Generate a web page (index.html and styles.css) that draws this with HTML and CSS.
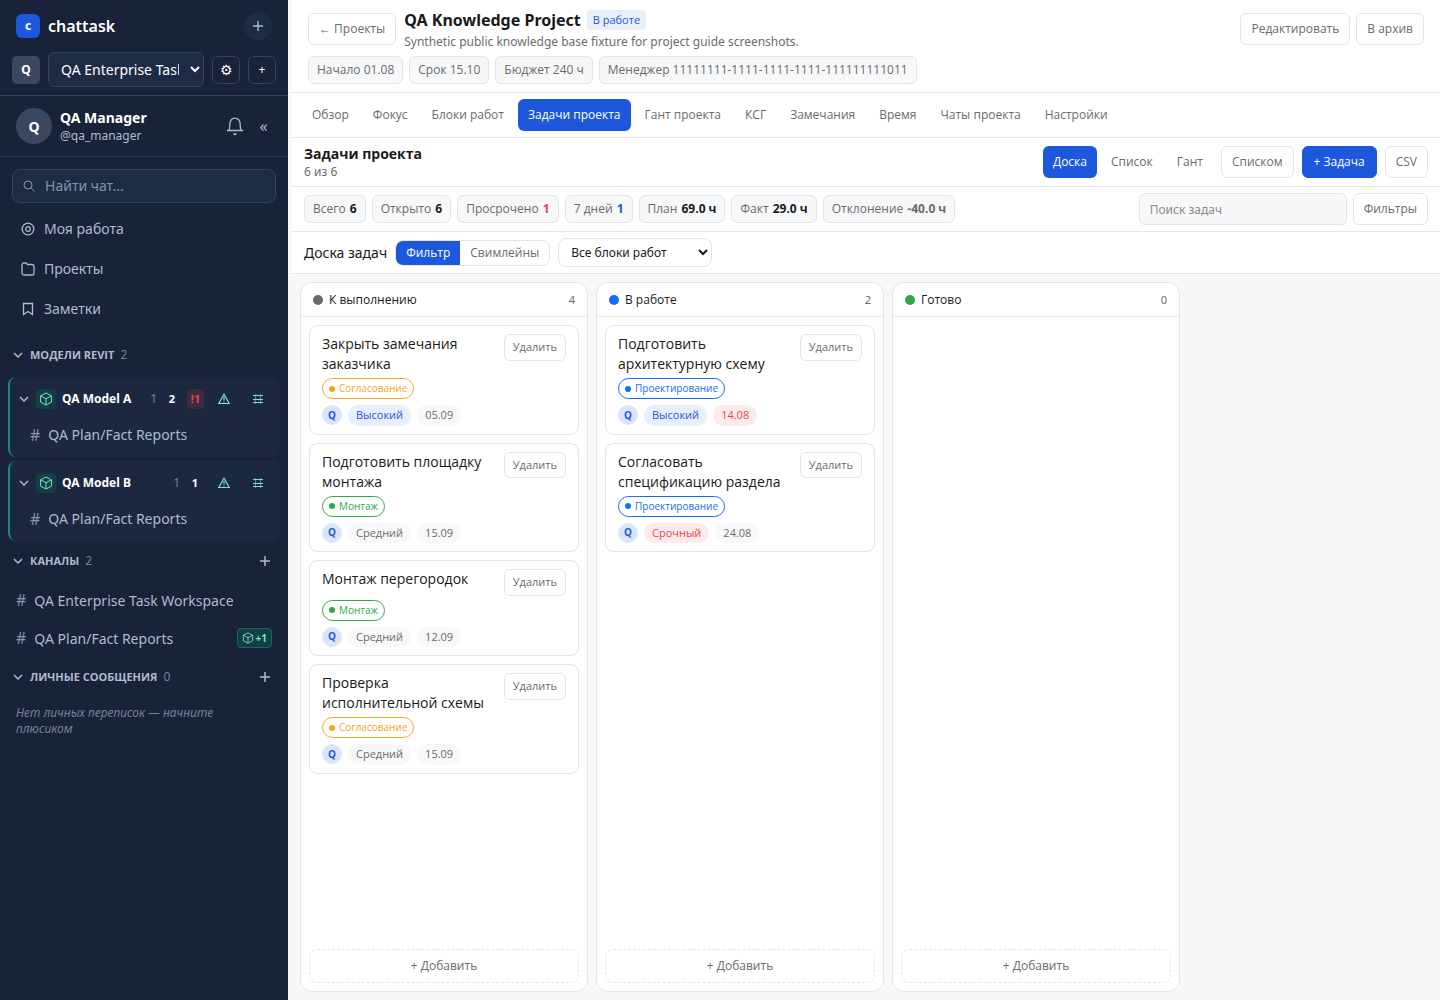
FILE: index.html
```html
<!DOCTYPE html>
<html lang="ru">
<head>
<meta charset="utf-8">
<meta name="viewport" content="width=device-width, initial-scale=1">
<title>QA Knowledge Project — chattask</title>
<link rel="stylesheet" href="styles.css">
</head>
<body>
<svg class="sprite" aria-hidden="true">
  <symbol id="i-chevron" viewBox="0 0 12 12"><path d="M2 4l4 4 4-4"/></symbol>
  <symbol id="i-plus" viewBox="0 0 12 12"><path d="M6 1v10M1 6h10"/></symbol>
  <symbol id="i-cube" viewBox="0 0 14 14"><path d="M7 1l5.4 2.8v6.4L7 13l-5.4-2.8V3.8zM1.6 3.8L7 6.7l5.4-2.9M7 6.7V13"/></symbol>
  <symbol id="i-warn" viewBox="0 0 14 14"><path d="M7 2.2L1.8 11.5h10.4zM7 5v3.6M7 9.500v1"/></symbol>
  <symbol id="i-grid" viewBox="0 0 14 14"><path d="M2 3.500h10M2 7.500h10M2 10.500h10"/><path d="M4.500 2v10M9.500 2v10" opacity=".5"/></symbol>
</svg>
<div class="app">
  <aside class="sidebar">
    <div class="brand">
      <span class="brand-logo">c</span>
      <span class="brand-name">chattask</span>
      <button class="round-btn" type="button" aria-label="Создать"><svg class="icon-12"><use href="#i-plus"/></svg></button>
    </div>
    <div class="workspace">
      <span class="ws-avatar">Q</span>
      <select class="ws-select" aria-label="Рабочее пространство"><option>QA Enterprise Task Workspace</option></select>
      <button class="ws-btn gear" type="button" aria-label="Настройки пространства">⚙</button>
      <button class="ws-btn" type="button" aria-label="Новое пространство">+</button>
    </div>
    <div class="user">
      <span class="user-avatar">Q</span>
      <div class="user-info">
        <div class="user-name">QA Manager</div>
        <div class="user-handle">@qa_manager</div>
      </div>
      <button class="bare-btn" type="button" aria-label="Уведомления"><svg class="icon-20" viewBox="0 0 20 20"><path d="M3.800 14.500c.9-1.700 1.100-3.400 1.100-7a5.100 5.300 0 0 1 10.200 0c0 3.600.2 5.300 1.100 7M1.900 14.500h16.200M8.400 17.400l1.600 1.200 1.600-1.200"/></svg></button>
      <button class="bare-btn collapse" type="button" aria-label="Свернуть">«</button>
    </div>
    <div class="side-search">
      <svg class="icon-12" viewBox="0 0 12 12"><circle cx="5" cy="5" r="4"/><path d="M8 8l3.600 3.600"/></svg>
      <input type="search" placeholder="Найти чат..." aria-label="Найти чат">
    </div>
    <nav class="side-nav">
      <a href="#work"><svg class="icon-16" viewBox="0 0 16 16"><circle cx="8" cy="8" r="5.800"/><circle cx="8" cy="8" r="2.300"/></svg>Моя работа</a>
      <a href="#projects"><svg class="icon-16" viewBox="0 0 16 16"><path d="M2 12V4a2 2 0 0 1 2-2h2l1.500 1.500H12a2 2 0 0 1 2 2V12a2 2 0 0 1-2 2H4a2 2 0 0 1-2-2z"/></svg>Проекты</a>
      <a href="#notes"><svg class="icon-16" viewBox="0 0 16 16"><path d="M3.500 2.500h9v11L8 10.500l-4.500 3z"/></svg>Заметки</a>
    </nav>
    <div class="side-head"><svg class="icon-12"><use href="#i-chevron"/></svg><h2>МОДЕЛИ REVIT</h2><span class="muted">2</span></div>
    <div class="models">
      <section class="model">
        <div class="model-row">
          <svg class="icon-12 chev"><use href="#i-chevron"/></svg>
          <span class="cube"><svg class="icon-14"><use href="#i-cube"/></svg></span>
          <span class="model-name">QA Model A</span>
          <span class="count-dim">1</span><span class="count">2</span><span class="count alert">!1</span>
          <button class="model-btn" type="button" aria-label="Предупреждения"><svg class="icon-14"><use href="#i-warn"/></svg></button>
          <button class="model-btn" type="button" aria-label="Оси"><svg class="icon-14"><use href="#i-grid"/></svg></button>
        </div>
        <a class="channel nested" href="#a"><span class="hash">#</span>QA Plan/Fact Reports</a>
      </section>
      <section class="model">
        <div class="model-row">
          <svg class="icon-12 chev"><use href="#i-chevron"/></svg>
          <span class="cube"><svg class="icon-14"><use href="#i-cube"/></svg></span>
          <span class="model-name">QA Model B</span>
          <span class="count-dim">1</span><span class="count">1</span>
          <button class="model-btn" type="button" aria-label="Предупреждения"><svg class="icon-14"><use href="#i-warn"/></svg></button>
          <button class="model-btn" type="button" aria-label="Оси"><svg class="icon-14"><use href="#i-grid"/></svg></button>
        </div>
        <a class="channel nested" href="#b"><span class="hash">#</span>QA Plan/Fact Reports</a>
      </section>
    </div>
    <div class="side-head"><svg class="icon-12"><use href="#i-chevron"/></svg><h2>КАНАЛЫ</h2><span class="muted">2</span><button class="add-btn" type="button" aria-label="Добавить канал"><svg class="icon-12"><use href="#i-plus"/></svg></button></div>
    <a class="channel" href="#workspace"><span class="hash">#</span>QA Enterprise Task Workspace</a>
    <a class="channel" href="#reports"><span class="hash">#</span>QA Plan/Fact Reports<span class="model-tag"><svg class="icon-12"><use href="#i-cube"/></svg>+1</span></a>
    <div class="side-head"><svg class="icon-12"><use href="#i-chevron"/></svg><h2>ЛИЧНЫЕ СООБЩЕНИЯ</h2><span class="muted">0</span><button class="add-btn" type="button" aria-label="Новое сообщение"><svg class="icon-12"><use href="#i-plus"/></svg></button></div>
    <p class="side-empty">Нет личных переписок — начните плюсиком</p>
  </aside>

  <main class="main">
    <header class="project">
      <div class="project-top">
        <button class="btn" type="button">← Проекты</button>
        <div class="project-info">
          <div class="project-title"><h1>QA Knowledge Project</h1><span class="status">В работе</span></div>
          <p>Synthetic public knowledge base fixture for project guide screenshots.</p>
        </div>
        <div class="group">
          <button class="btn" type="button">Редактировать</button>
          <button class="btn" type="button">В архив</button>
        </div>
      </div>
      <div class="chips">
        <span class="chip">Начало 01.08</span>
        <span class="chip">Срок 15.10</span>
        <span class="chip">Бюджет 240 ч</span>
        <span class="chip">Менеджер 11111111-1111-1111-1111-111111111011</span>
      </div>
    </header>
    <nav class="tabs">
      <a class="tab" href="#overview">Обзор</a>
      <a class="tab" href="#focus">Фокус</a>
      <a class="tab" href="#blocks">Блоки работ</a>
      <a class="tab active" href="#tasks" aria-current="page">Задачи проекта</a>
      <a class="tab" href="#gantt">Гант проекта</a>
      <a class="tab" href="#ksg">КСГ</a>
      <a class="tab" href="#remarks">Замечания</a>
      <a class="tab" href="#time">Время</a>
      <a class="tab" href="#chats">Чаты проекта</a>
      <a class="tab" href="#settings">Настройки</a>
    </nav>
    <div class="bar">
      <div class="bar-title"><h2>Задачи проекта</h2><p>6 из 6</p></div>
      <div class="actions">
        <div class="views">
          <button class="tab active" type="button">Доска</button>
          <button class="tab" type="button">Список</button>
          <button class="tab" type="button">Гант</button>
        </div>
        <button class="btn" type="button">Списком</button>
        <button class="btn primary" type="button">+ Задача</button>
        <button class="btn" type="button">CSV</button>
      </div>
    </div>
    <div class="bar stats">
      <div class="chips">
        <span class="chip">Всего <b>6</b></span>
        <span class="chip">Открыто <b>6</b></span>
        <span class="chip">Просрочено <b class="red">1</b></span>
        <span class="chip">7 дней <b class="blue">1</b></span>
        <span class="chip">План <b>69.0 ч</b></span>
        <span class="chip">Факт <b>29.0 ч</b></span>
        <span class="chip">Отклонение <b class="gray">-40.0 ч</b></span>
      </div>
      <div class="group">
        <input class="task-search" type="search" placeholder="Поиск задач" aria-label="Поиск задач">
        <button class="btn" type="button">Фильтры</button>
      </div>
    </div>
    <div class="bar board-bar">
      <h3>Доска задач</h3>
      <div class="segmented"><button class="on" type="button">Фильтр</button><button type="button">Свимлейны</button></div>
      <select class="block-select" aria-label="Блок работ"><option>Все блоки работ</option></select>
    </div>
    <div class="board">
      <section class="column">
        <header class="column-head"><span class="dot todo"></span><h4>К выполнению</h4><span class="column-count">4</span></header>
        <div class="cards">
          <article class="card">
            <div class="card-top"><h5>Закрыть замечания заказчика</h5><button class="delete" type="button">Удалить</button></div>
            <span class="block orange">Согласование</span>
            <div class="meta"><span class="who">Q</span><span class="pill info">Высокий</span><span class="pill">05.09</span></div>
          </article>
          <article class="card">
            <div class="card-top"><h5>Подготовить площадку монтажа</h5><button class="delete" type="button">Удалить</button></div>
            <span class="block green">Монтаж</span>
            <div class="meta"><span class="who">Q</span><span class="pill">Средний</span><span class="pill">15.09</span></div>
          </article>
          <article class="card">
            <div class="card-top"><h5>Монтаж перегородок</h5><button class="delete" type="button">Удалить</button></div>
            <span class="block green">Монтаж</span>
            <div class="meta"><span class="who">Q</span><span class="pill">Средний</span><span class="pill">12.09</span></div>
          </article>
          <article class="card">
            <div class="card-top"><h5>Проверка исполнительной схемы</h5><button class="delete" type="button">Удалить</button></div>
            <span class="block orange">Согласование</span>
            <div class="meta"><span class="who">Q</span><span class="pill">Средний</span><span class="pill">15.09</span></div>
          </article>
        </div>
        <button class="add-task" type="button">+ Добавить</button>
      </section>
      <section class="column">
        <header class="column-head"><span class="dot doing"></span><h4>В работе</h4><span class="column-count">2</span></header>
        <div class="cards">
          <article class="card">
            <div class="card-top"><h5>Подготовить архитектурную схему</h5><button class="delete" type="button">Удалить</button></div>
            <span class="block azure">Проектирование</span>
            <div class="meta"><span class="who">Q</span><span class="pill info">Высокий</span><span class="pill danger">14.08</span></div>
          </article>
          <article class="card">
            <div class="card-top"><h5>Согласовать спецификацию раздела</h5><button class="delete" type="button">Удалить</button></div>
            <span class="block azure">Проектирование</span>
            <div class="meta"><span class="who">Q</span><span class="pill danger">Срочный</span><span class="pill">24.08</span></div>
          </article>
        </div>
        <button class="add-task" type="button">+ Добавить</button>
      </section>
      <section class="column">
        <header class="column-head"><span class="dot done"></span><h4>Готово</h4><span class="column-count">0</span></header>
        <div class="cards"></div>
        <button class="add-task" type="button">+ Добавить</button>
      </section>
    </div>
  </main>
</div>
</body>
</html>
```
FILE: styles.css
```css
:root {
  --ink: #1a1a1a;
  --gray: #6b6b6b;
  --line: #e5e5e5;
  --soft: #f7f8fa;
  --blue: #1d57db;
  --blue-soft: #e8eefc;
  --red: #e5484d;
  --side: #182238;
  --side-raised: #1e2b45;
  --side-line: #34425c;
  --side-text: #aebbd0;
  --mint: #7ee0cc;
  --control-font: "Open Sans", "Noto Sans", sans-serif;
}

* { box-sizing: border-box; }
body {
  margin: 0;
  background: var(--soft);
  color: var(--ink);
  font: 14px/1.5 "Noto Sans", "Liberation Sans", sans-serif;
}
h1, h2, h3, h4, h5, p { margin: 0; font: inherit; }
button, input, select { font: inherit; color: inherit; margin: 0; }
button { cursor: pointer; padding: 0; border: 0; background: none; }
a { color: inherit; text-decoration: none; }
svg { fill: none; stroke: currentColor; flex: none; }
.sprite { display: none; }
.icon-12 { width: 12px; height: 12px; }
.icon-14 { width: 14px; height: 14px; }
.icon-16 { width: 16px; height: 16px; stroke-width: 1.3; }
.icon-20 { width: 20px; height: 20px; stroke-width: 1.3; }

.app { display: flex; gap: 4px; height: 100vh; }

/* Sidebar */
.sidebar {
  flex: none;
  width: 288px;
  overflow: auto;
  background: var(--side);
  color: var(--side-text);
}
.brand { display: flex; align-items: center; gap: 8px; padding: 12px 16px; }
.brand-logo {
  display: grid;
  place-items: center;
  width: 24px;
  height: 24px;
  border-radius: 6px;
  background: var(--blue);
  color: #fff;
  font-size: 12px;
  font-weight: 700;
}
.brand-name { flex: 1; color: #fff; font-size: 16px; line-height: 24px; font-weight: 600; }
.round-btn {
  display: grid;
  place-items: center;
  width: 28px;
  height: 28px;
  border-radius: 50%;
  background: var(--side-raised);
}
.round-btn svg { stroke-width: 1.4; }
.workspace {
  display: flex;
  align-items: center;
  gap: 8px;
  padding: 0 12px 8px;
  border-bottom: 1px solid var(--side-line);
}
.ws-avatar {
  display: grid;
  place-items: center;
  flex: none;
  width: 28px;
  height: 28px;
  border-radius: 5px;
  background: #3a4760;
  color: #fff;
  font-size: 12px;
  font-weight: 700;
}
.ws-select {
  flex: 1;
  min-width: 0;
  height: 35px;
  padding: 0 8px;
  border: 1px solid var(--side-line);
  border-radius: 6px;
  background: var(--side-raised);
  color: #fff;
}
.ws-select, .block-select { cursor: pointer; }
.ws-btn {
  flex: none;
  width: 28px;
  height: 28px;
  border: 1px solid var(--side-line);
  border-radius: 6px;
  color: #fff;
  font-size: 12px;
}
.ws-btn.gear { font-size: 14px; }
.user {
  display: flex;
  align-items: center;
  gap: 8px;
  padding: 12px 16px;
  border-bottom: 1px solid #2d3a52;
}
.user-avatar {
  display: grid;
  place-items: center;
  width: 36px;
  height: 36px;
  border-radius: 50%;
  background: #3a4760;
  color: #fff;
  font-weight: 700;
}
.user-info { flex: 1; }
.user-name { color: #fff; line-height: 20px; font-weight: 700; }
.user-handle { font-size: 12px; line-height: 16px; }
.bare-btn { display: grid; place-items: center; width: 24px; height: 28px; }
.bare-btn.collapse { width: 17px; font-size: 16px; }
.side-search {
  display: flex;
  align-items: center;
  gap: 10px;
  height: 34px;
  margin: 12px 12px 6px;
  padding: 0 10px;
  border: 1px solid var(--side-line);
  border-radius: 8px;
  background: var(--side-raised);
  color: #8593aa;
}
.side-search input { flex: 1; min-width: 0; height: 20px; padding: 0; border: 0; outline: 0; background: none; color: #fff; line-height: 20px; }
.side-search input::placeholder { color: #8593aa; }
.side-nav { margin-bottom: 6px; }
.side-nav a { display: flex; align-items: center; gap: 8px; height: 40px; padding: 0 20px; line-height: 22px; }
.side-head { display: flex; align-items: center; gap: 6px; height: 40px; padding: 0 12px; }
.side-head svg { stroke-width: 1.5; }
.side-head h2 { font-family: var(--control-font); font-size: 11px; font-weight: 700; }
.muted { color: #74829a; font-size: 12px; }
.add-btn { display: grid; place-items: center; width: 22px; height: 22px; margin-left: auto; }
.models { display: grid; gap: 4px; margin: 2px 8px 0; }
.model {
  padding: 4px 8px;
  border-left: 2px solid #1b8a7c;
  border-radius: 8px;
  background: #1b2840;
}
.model-row { display: flex; align-items: center; gap: 6px; height: 36px; font-size: 12px; }
.chev { stroke-width: 1.5; }
.cube {
  display: grid;
  place-items: center;
  width: 20px;
  height: 20px;
  border-radius: 4px;
  background: #123f43;
  color: var(--mint);
}
.model-name { flex: 1; color: #fff; font-weight: 700; }
.count-dim { color: #74829a; }
.count {
  display: grid;
  place-items: center;
  min-width: 18px;
  height: 20px;
  border-radius: 4px;
  color: #fff;
  font-size: 11px;
  font-weight: 700;
}
.count.alert { min-width: 17px; background: #3c2b3e; color: var(--red); }
.model-btn { display: grid; place-items: center; width: 28px; height: 28px; color: var(--mint); }
.model-btn svg { stroke-width: 1.2; }
.channel { display: flex; align-items: center; gap: 8px; height: 38px; padding: 0 16px; }
.channel.nested { height: 36px; padding: 0 12px; line-height: 22px; }
.hash { color: #8593aa; font-size: 16px; }
.model-tag {
  display: flex;
  align-items: center;
  gap: 2px;
  height: 20px;
  margin-left: auto;
  padding: 0 4px;
  border: 1px solid #17695f;
  border-radius: 4px;
  background: #123f43;
  color: var(--mint);
  font-size: 10px;
  font-weight: 700;
}
.side-empty { padding: 8px 16px; color: #74829a; font-size: 12px; line-height: 16px; font-style: italic; }

/* Project header */
.main { display: flex; flex: 1; flex-direction: column; min-width: 0; }
.project { padding: 8px 16px; border-bottom: 1px solid var(--line); background: #fff; }
.project-top { display: flex; align-items: center; gap: 8px; margin-bottom: 6px; }
.project-info { flex: 1; min-width: 0; }
.project-title { display: flex; align-items: center; gap: 6px; }
.project-title h1 { font-size: 16px; line-height: 24px; font-weight: 700; }
.project-info p { padding-top: 1px; color: var(--gray); font-size: 12px; line-height: 17px; }
.status {
  padding: 0 6px;
  border-radius: 4px;
  background: var(--blue-soft);
  color: var(--blue);
  font-family: var(--control-font);
  font-size: 11px;
  line-height: 20px;
}
.btn {
  height: 32px;
  padding: 0 10px;
  border: 1px solid var(--line);
  border-radius: 6px;
  background: #fff;
  color: var(--gray);
  font-family: var(--control-font);
  font-size: 12px;
  white-space: nowrap;
}
.btn.primary { padding: 0 11px; border-color: var(--blue); background: var(--blue); color: #fff; }
.group, .chips { display: flex; align-items: center; gap: 6px; }
.chip {
  padding: 0 8px;
  border: 1px solid var(--line);
  border-radius: 6px;
  background: var(--soft);
  color: var(--gray);
  font-family: var(--control-font);
  font-size: 12px;
  line-height: 26px;
  white-space: nowrap;
}
.chip b { margin-left: 1px; color: var(--ink); }
.chip .red { color: var(--red); }
.chip .blue { color: var(--blue); }
.chip .gray { color: var(--gray); }

.tabs {
  display: flex;
  gap: 4px;
  padding: 6px 10px;
  border-bottom: 1px solid var(--line);
  background: #fff;
}
.tab {
  height: 32px;
  padding: 0 10px;
  border-radius: 6px;
  color: var(--gray);
  font-family: var(--control-font);
  font-size: 12px;
  line-height: 32px;
  white-space: nowrap;
}
.tab.active { background: var(--blue); color: #fff; }

.bar {
  display: flex;
  align-items: center;
  justify-content: space-between;
  padding: 6px 12px;
  border-bottom: 1px solid var(--line);
  background: #fff;
}
.bar-title h2 { font-family: var(--control-font); line-height: 20px; font-weight: 700; }
.bar-title p { color: var(--gray); font-size: 12px; line-height: 16px; }
.actions { display: flex; gap: 8px; }
.views { display: flex; gap: 4px; }
.task-search {
  width: 208px;
  height: 32px;
  padding: 0 10px;
  border: 1px solid var(--line);
  border-radius: 6px;
  background: var(--soft);
  font-size: 12px;
}
.task-search::placeholder { color: #8a8a8a; }
.board-bar { justify-content: flex-start; gap: 8px; }
.segmented { display: flex; height: 26px; overflow: hidden; border: 1px solid var(--line); border-radius: 8px; }
.segmented button { padding: 0 10px; color: var(--gray); font-family: var(--control-font); font-size: 12px; }
.segmented .on { background: var(--blue); color: #fff; }
.block-select {
  width: 154px;
  height: 29px;
  padding: 0 0 0 8px;
  border: 1px solid var(--line);
  border-radius: 8px;
  background: #fff;
  font-size: 12px;
}

/* Board */
.board { display: flex; flex: 1; gap: 8px; min-height: 0; padding: 8px; overflow-x: auto; }
.column {
  display: flex;
  flex: none;
  flex-direction: column;
  width: 288px;
  border: 1px solid var(--line);
  border-radius: 12px;
  background: #fff;
}
.column-head {
  display: flex;
  align-items: center;
  gap: 6px;
  height: 34px;
  padding: 0 12px;
  border-bottom: 1px solid var(--line);
  font-size: 12px;
  line-height: 17px;
}
.column-head h4 { font-family: var(--control-font); line-height: 19px; }
.column-count { margin-left: auto; color: var(--gray); font-size: 11px; }
.dot { width: 10px; height: 10px; border-radius: 50%; }
.dot.todo { background: #6b6b6b; }
.dot.doing { background: #146cff; }
.dot.done { background: #2fa84f; }
.cards { display: flex; flex: 1; flex-direction: column; gap: 8px; min-height: 0; padding: 8px; overflow-y: auto; }
.card { flex: none; padding: 8px 12px; border: 1px solid var(--line); border-radius: 8px; font-family: var(--control-font); }
.card-top { display: flex; align-items: flex-start; justify-content: space-between; gap: 8px; margin-bottom: 4px; }
.card h5 { line-height: 20px; }
.delete {
  flex: none;
  padding: 4px 8px;
  border: 1px solid var(--line);
  border-radius: 6px;
  color: var(--gray);
  font-size: 11px;
}
.block {
  display: flex;
  align-items: center;
  gap: 4px;
  width: fit-content;
  margin-bottom: 6px;
  padding: 2px 6px;
  border: 1px solid;
  border-radius: 11px;
  font-size: 10px;
}
.block::before { content: ""; width: 6px; height: 6px; border-radius: 50%; background: currentColor; }
.orange { color: #f5a623; }
.green { color: #2fa84f; }
.azure { color: #146cff; }
.meta { display: flex; align-items: center; gap: 6px; }
.who {
  display: grid;
  place-items: center;
  width: 20px;
  height: 20px;
  border-radius: 50%;
  background: #dbe5fa;
  color: var(--blue);
  font-size: 10px;
  font-weight: 700;
}
.pill { padding: 2px 8px; border-radius: 11px; background: var(--soft); color: var(--gray); font-size: 11px; }
.pill.info { background: var(--blue-soft); color: var(--blue); }
.pill.danger { background: #fdebec; color: var(--red); }
.add-task {
  height: 34px;
  margin: 0 8px 8px;
  border: 1px dashed var(--line);
  border-radius: 8px;
  color: var(--gray);
  font-family: var(--control-font);
  font-size: 12px;
}
```
